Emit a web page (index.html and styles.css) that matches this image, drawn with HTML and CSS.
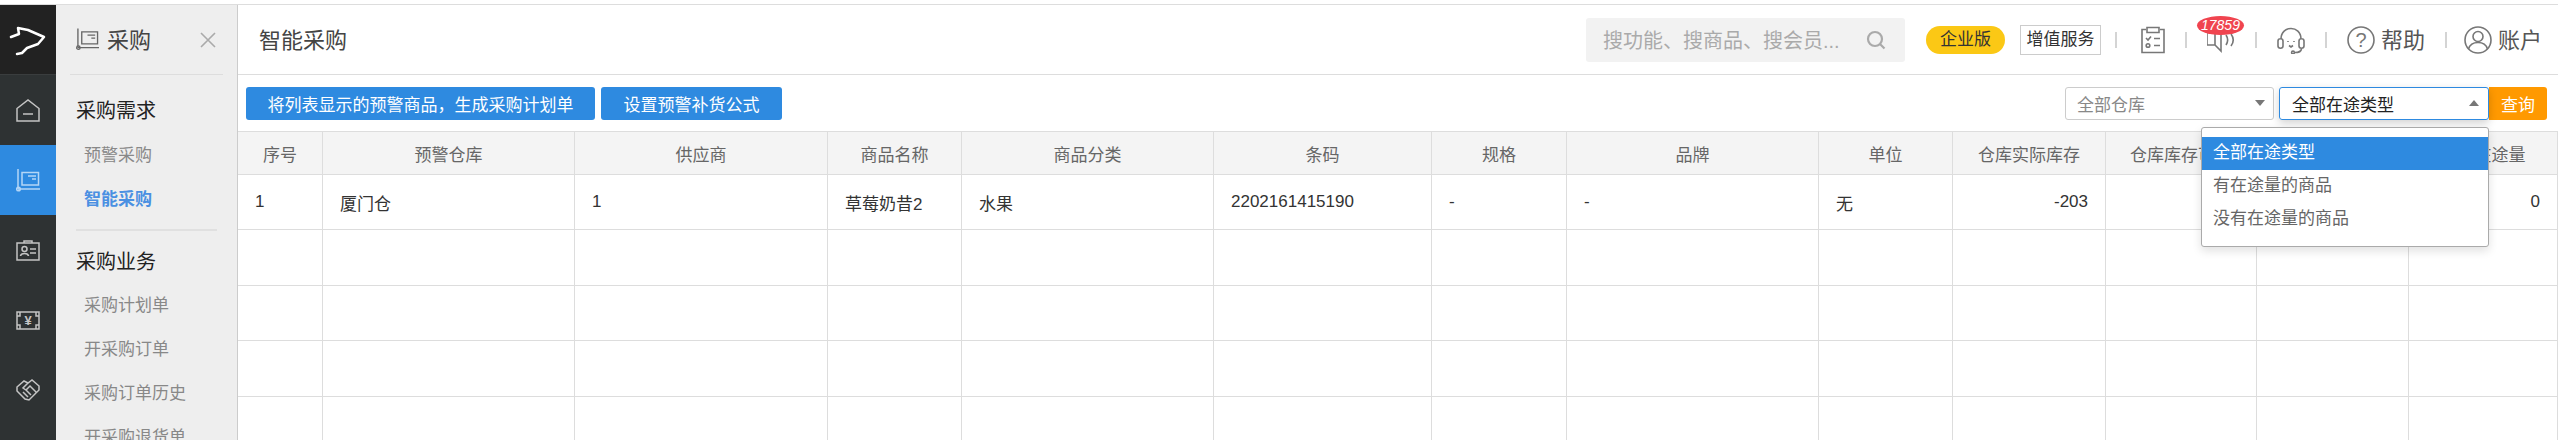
FILE: index.html
```html
<!DOCTYPE html>
<html lang="zh-CN">
  <head>
    <meta charset="UTF-8" />
    <meta name="viewport" content="width=device-width, initial-scale=1.0" />
    <title>智能采购</title>
    <link rel="stylesheet" href="styles.css">
  </head>

  <body>
    <div class="app">
      <nav class="rail">
        <div class="rail-logo">
          <svg width="56" height="69" viewBox="0 0 56 69"><path class="logo-line" d="M11 32 L19 29 L18 23 L28 25 L44 32 L38 39 L27 43 L22 48 L17 49" /></svg>
        </div>
        <div class="rail-item">
          <svg width="24" height="23" viewBox="0 0 24 23"><path d="M1 9.5 L12 1 L23 9.5 V22 H1 Z" /><path d="M7 15 H17" /></svg>
        </div>
        <div class="rail-item valgt">
          <svg width="24" height="23" viewBox="0 0 24 23"><path d="M2 0 V20 M2 20 H24 M6 3.5 H22.5 V16 H6 Z M12 7 H20 M16 10 H20" /><circle cx="2.5" cy="20" r="1.8" /></svg>
        </div>
        <div class="rail-item">
          <svg width="24" height="21" viewBox="0 0 24 21"><path d="M1 3 H23 V20 H1 Z M8 3 V1 H16 V3 M14 9 H20 M14 13 H20" /><circle cx="8.5" cy="9" r="2.5" /><path d="M4.5 16 C5 12.5 12 12.5 12.5 16" /></svg>
        </div>
        <div class="rail-item">
          <svg width="24" height="19" viewBox="0 0 24 19"><path d="M1 1 H23 V18 H1 Z M1 5 H4 V1 M20 1 V5 H23 M1 14 H4 V18 M20 18 V14 H23" /><text x="12" y="14" text-anchor="middle" class="money-sign">¥</text></svg>
        </div>
        <div class="rail-item">
          <svg width="24" height="22" viewBox="0 0 24 22"><path d="M1 8 L8 2 L12 4 L16 1 L23 7 V11 L13 21 L9 20 L1 12 Z M12 4 L7 9 L10 11 L14 7 L20 13 M7 13 L12 18 M10 11 L15 16" /></svg>
        </div>
      </nav>

      <aside class="panel">
        <div class="panel-top">
          <svg class="panel-icon" width="23" height="23" viewBox="0 0 24 23"><path d="M2 0 V20 M2 20 H24 M6 3.5 H22.5 V16 H6 Z M12 7 H20 M16 10 H20" /><circle cx="2.5" cy="20" r="1.8" /></svg>
          <span class="panel-name">采购</span>
          <svg class="panel-close" width="16" height="16" viewBox="0 0 16 16"><path d="M1 1 L15 15 M15 1 L1 15" /></svg>
        </div>
        <div class="group">
          <h2>采购需求</h2>
          <a>预警采购</a>
          <a class="aktiv">智能采购</a>
        </div>
        <div class="group">
          <h2>采购业务</h2>
          <a>采购计划单</a>
          <a>开采购订单</a>
          <a>采购订单历史</a>
          <a>开采购退货单</a>
        </div>
      </aside>

      <main class="main">
        <header class="top">
          <h1>智能采购</h1>
          <div class="search">
            <span>搜功能、搜商品、搜会员...</span>
            <svg width="20" height="20" viewBox="0 0 20 20"><circle cx="9" cy="9" r="7" /><path d="M14 14 L18.5 18.5" /></svg>
          </div>
          <span class="edition">企业版</span>
          <span class="addon">增值服务</span>
          <i class="sep"></i>
          <svg class="tool-icon" width="28" height="28" viewBox="0 0 28 28"><path d="M9 3.5 H5 V26.5 H27 V3.5 H23 M10 1.5 H22 V6.5 H10 Z M9 12 L11 14 L14 10.5 M17 12.5 H23 M17 19.5 H23" /><circle cx="11" cy="19.5" r="1.8" /></svg>
          <i class="sep"></i>
          <div class="tool-bell">
            <svg class="tool-icon" width="28" height="28" viewBox="0 0 28 28"><path d="M0 6 V19 H8 L14 25 V6 M8 6 V19 M19 9 C21 12 21 16 19 19 M24 8 C27 12 27 16 24 20" /></svg>
            <span class="badge">17859</span>
          </div>
          <i class="sep"></i>
          <svg class="tool-icon" width="28" height="28" viewBox="0 0 28 28"><path d="M4 13 C4 -1 24 -1 24 13 M1 15 C1 12 6 12 6 15 V20 C6 23 1 23 1 20 Z M22 15 C22 12 27 12 27 15 V20 C27 23 22 23 22 20 Z M24.5 23 C24 26 21 26.500 18 26.500 M11 15 V16 M17 15 V16 M12 19.500 L14 21 L16 19.500" /><circle cx="16" cy="26.500" r="1.400" /></svg>
          <i class="sep"></i>
          <div class="tool-text">
            <svg class="tool-icon" width="28" height="28" viewBox="0 0 28 28"><circle cx="14" cy="14" r="13" /><text x="14" y="21" text-anchor="middle" class="help-sign">?</text></svg>
            <span>帮助</span>
          </div>
          <i class="sep sep-last"></i>
          <div class="tool-text">
            <svg class="tool-icon" width="28" height="28" viewBox="0 0 28 28"><circle cx="14" cy="14" r="13" /><circle cx="14" cy="10.500" r="5" /><path d="M4.500 23 C6 18 10 16.500 14 16.500 C18 16.500 22 18 23.500 23" /></svg>
            <span>账户</span>
          </div>
        </header>

        <div class="toolbar">
          <button class="btn btn-lang">将列表显示的预警商品，生成采购计划单</button>
          <button class="btn btn-kort">设置预警补货公式</button>
          <div class="select select-lager">
            <span>全部仓库</span>
            <i class="arrow-down"></i>
          </div>
          <div class="select select-open">
            <span>全部在途类型</span>
            <i class="arrow-up"></i>
            <ul class="dropdown">
              <li class="valgt">全部在途类型</li>
              <li>有在途量的商品</li>
              <li>没有在途量的商品</li>
            </ul>
          </div>
          <button class="btn-query">查询</button>
        </div>

        <table class="data">
          <colgroup>
            <col class="w85" /><col class="w252" /><col class="w253" /><col class="w134" /><col class="w252" /><col class="w218" /><col class="w135" /><col class="w252" /><col class="w134" /><col class="w153" /><col class="w151" /><col class="w152" /><col class="w149" />
          </colgroup>
          <thead>
            <tr>
              <th>序号</th><th>预警仓库</th><th>供应商</th><th>商品名称</th><th>商品分类</th><th>条码</th><th>规格</th><th>品牌</th><th>单位</th><th>仓库实际库存</th><th>仓库库存可用</th><th></th><th>采购在途量</th>
            </tr>
          </thead>
          <tbody>
            <tr>
              <td>1</td><td>厦门仓</td><td>1</td><td>草莓奶昔2</td><td>水果</td><td>2202161415190</td><td>-</td><td>-</td><td>无</td><td class="num">-203</td><td></td><td></td><td class="num">0</td>
            </tr>
            <tr><td></td><td></td><td></td><td></td><td></td><td></td><td></td><td></td><td></td><td></td><td></td><td></td><td></td></tr>
            <tr><td></td><td></td><td></td><td></td><td></td><td></td><td></td><td></td><td></td><td></td><td></td><td></td><td></td></tr>
            <tr><td></td><td></td><td></td><td></td><td></td><td></td><td></td><td></td><td></td><td></td><td></td><td></td><td></td></tr>
            <tr><td></td><td></td><td></td><td></td><td></td><td></td><td></td><td></td><td></td><td></td><td></td><td></td><td></td></tr>
          </tbody>
        </table>
      </main>
    </div>
  </body>
</html>
```

FILE: styles.css
```css
* {
  box-sizing: border-box;
}

html,
body {
  margin: 0;
  height: 440px;
  overflow: hidden;
  background-color: white;
  font-family: "Liberation Sans", "Noto Sans CJK SC", sans-serif;
  font-size: 17px;
  color: #333;
}

svg {
  display: block;
  fill: none;
}

.app {
  display: flex;
  height: 440px;
  padding-top: 4px;
}

/* dark icon rail */
.rail {
  width: 56px;
  flex-shrink: 0;
  margin-top: 1px;
  background-color: #2e3233;
  box-shadow: 0 -1px 0 #ddd;
}

.rail-logo {
  height: 70px;
  background-color: #222;
  border-bottom: 1px solid #3a3d3e;
}

.logo-line {
  stroke: white;
  stroke-width: 2.5;
  stroke-linejoin: round;
  stroke-linecap: round;
}

.rail-item {
  display: flex;
  align-items: center;
  justify-content: center;
  height: 70px;
}

.rail-item svg {
  stroke: #c4c4c4;
  stroke-width: 1.5;
}

.rail-item.valgt {
  background-color: #2e8ae0;
}

.rail-item.valgt svg {
  stroke: #b4d6f6;
}

.money-sign {
  font-size: 13px;
  font-weight: bold;
  fill: #c4c4c4;
  stroke: none;
}

/* submenu */
.panel {
  width: 182px;
  flex-shrink: 0;
  margin-top: 1px;
  background-color: #eee;
  border-right: 1px solid #ccc;
  box-shadow: 0 -1px 0 #ddd;
  overflow: hidden;
}

.panel-top {
  display: flex;
  align-items: center;
  height: 70px;
  margin: 0 14px;
  padding-left: 6px;
  border-bottom: 1px solid #ddd;
}

.panel-icon {
  stroke: #666;
  stroke-width: 1.4;
}

.panel-name {
  margin-left: 8px;
  padding-bottom: 3px;
  font-size: 22px;
  color: #444;
}

.panel-close {
  margin-left: auto;
  margin-right: 7px;
  stroke: #aaa;
  stroke-width: 1.6;
}

.group {
  margin: 0 20px;
  padding-top: 14px;
  padding-bottom: 6px;
  border-bottom: 2px solid #e0e0e0;
}

.group + .group {
  padding-top: 9px;
  border-bottom: 0;
}

.group h2 {
  margin: 0;
  font-size: 20px;
  font-weight: normal;
  line-height: 44px;
  color: #222;
}

.group h2 + a {
  margin-top: 1px;
}

.group + .group h2 + a {
  margin-top: 0;
}

.group a {
  display: block;
  padding-left: 8px;
  line-height: 44.3px;
  white-space: nowrap;
  color: #888;
}

.group a.aktiv {
  font-weight: bold;
  color: #4a90e2;
}

/* main area */
.main {
  flex: 1;
  min-width: 0;
  border-top: 1px solid #ddd;
}

.top {
  display: flex;
  align-items: center;
  height: 70px;
  padding-right: 16px;
  border-bottom: 1px solid #ddd;
}

.top h1 {
  margin: 0 auto 0 21px;
  padding-bottom: 3px;
  font-size: 22px;
  font-weight: normal;
  color: #444;
}

.search {
  display: flex;
  align-items: center;
  justify-content: space-between;
  width: 319px;
  height: 44px;
  padding: 0 19px 0 17px;
  border-radius: 3px;
  background-color: #f2f2f2;
  font-size: 20px;
  color: #aaa;
}

.search svg {
  stroke: #aaa;
  stroke-width: 2.2;
}

.edition {
  width: 79px;
  height: 28px;
  margin-left: 21px;
  border-radius: 14px;
  background-color: #fbc815;
  line-height: 27px;
  text-align: center;
}

.addon {
  width: 81px;
  height: 30px;
  margin-left: 15px;
  border: 1px solid #ccc;
  line-height: 27px;
  text-align: center;
  white-space: nowrap;
}

.sep {
  width: 2px;
  height: 16px;
  margin: 0 20px 0 14px;
  background-color: #d4d4d4;
}

.sep ~ .sep {
  margin-left: 20px;
}

.sep ~ .sep.sep-last {
  margin-right: 17px;
}

.tool-icon {
  flex-shrink: 0;
  stroke: #777;
  stroke-width: 1.6;
}

.tool-bell {
  position: relative;
  width: 28px;
}

.badge {
  position: absolute;
  left: -10px;
  top: -10px;
  width: 47px;
  height: 19px;
  border-radius: 50%;
  background-color: #f0444f;
  color: white;
  font-size: 14px;
  font-style: italic;
  line-height: 19px;
  text-align: center;
}

.tool-text {
  display: flex;
  align-items: center;
  gap: 6px;
  font-size: 22px;
  color: #555;
}

.tool-text span {
  padding-bottom: 4px;
}

.help-sign {
  font-size: 20px;
  fill: #777;
  stroke: none;
}

/* buttons and selects */
.toolbar {
  display: flex;
  align-items: center;
  height: 56px;
  padding: 0 11px 0 8px;
}

.btn {
  height: 33px;
  border: 0;
  border-radius: 3px;
  background-color: #2e8ae0;
  color: white;
  font-family: inherit;
  font-size: 17px;
  padding: 0;
}

.btn-lang {
  width: 349px;
}

.btn-kort {
  width: 181px;
  margin-left: 6px;
}

.select {
  position: relative;
  display: flex;
  align-items: center;
  justify-content: space-between;
  height: 33px;
  border: 1px solid #ccc;
  border-radius: 3px;
}

.select-lager {
  width: 209px;
  margin-left: auto;
  padding: 0 8px 0 11px;
  color: #888;
}

.select-open {
  width: 210px;
  margin-left: 5px;
  padding: 0 9px 0 12px;
  border-color: #2e8ae0;
  box-shadow: 0 3px 8px rgba(0, 0, 0, 0.18);
  color: #222;
}

.arrow-down {
  border-top: 6px solid #777;
  border-left: 5.5px solid transparent;
  border-right: 5.5px solid transparent;
}

.arrow-up {
  border-bottom: 6px solid #777;
  border-left: 5.5px solid transparent;
  border-right: 5.5px solid transparent;
}

.btn-query {
  width: 58px;
  height: 33px;
  padding: 0;
  border: 0;
  border-radius: 0 3px 3px 0;
  background-color: #f90;
  color: white;
  font-family: inherit;
  font-size: 17px;
}

.dropdown {
  position: absolute;
  right: -1px;
  top: 39px;
  z-index: 5;
  width: 288px;
  height: 120px;
  margin: 0;
  padding: 9px 0;
  list-style: none;
  border: 1px solid #aaa;
  border-radius: 3px;
  background-color: white;
  box-shadow: 0 4px 10px rgba(0, 0, 0, 0.12);
  color: #666;
}

.dropdown li {
  height: 33px;
  padding-left: 11px;
  line-height: 32px;
}

.dropdown li.valgt {
  background-color: #2e8ae0;
  color: white;
}

/* table */
.data {
  width: 2320px;
  table-layout: fixed;
  border-collapse: separate;
  border-spacing: 0;
}

.w85 { width: 85px; }
.w134 { width: 134px; }
.w135 { width: 135px; }
.w149 { width: 149px; }
.w151 { width: 151px; }
.w152 { width: 152px; }
.w153 { width: 153px; }
.w218 { width: 218px; }
.w252 { width: 252px; }
.w253 { width: 253px; }

.data th {
  height: 44px;
  padding: 0;
  border-top: 1px solid #ddd;
  border-right: 1px solid #ddd;
  border-bottom: 1px solid #ddd;
  background-color: #f4f4f4;
  font-weight: normal;
  color: #666;
  white-space: nowrap;
}

.data td {
  height: 55.4px;
  padding: 0 17px;
  border-right: 1px solid #ddd;
  border-bottom: 1px solid #ddd;
  color: #333;
}

.data td.num {
  text-align: right;
}
```
